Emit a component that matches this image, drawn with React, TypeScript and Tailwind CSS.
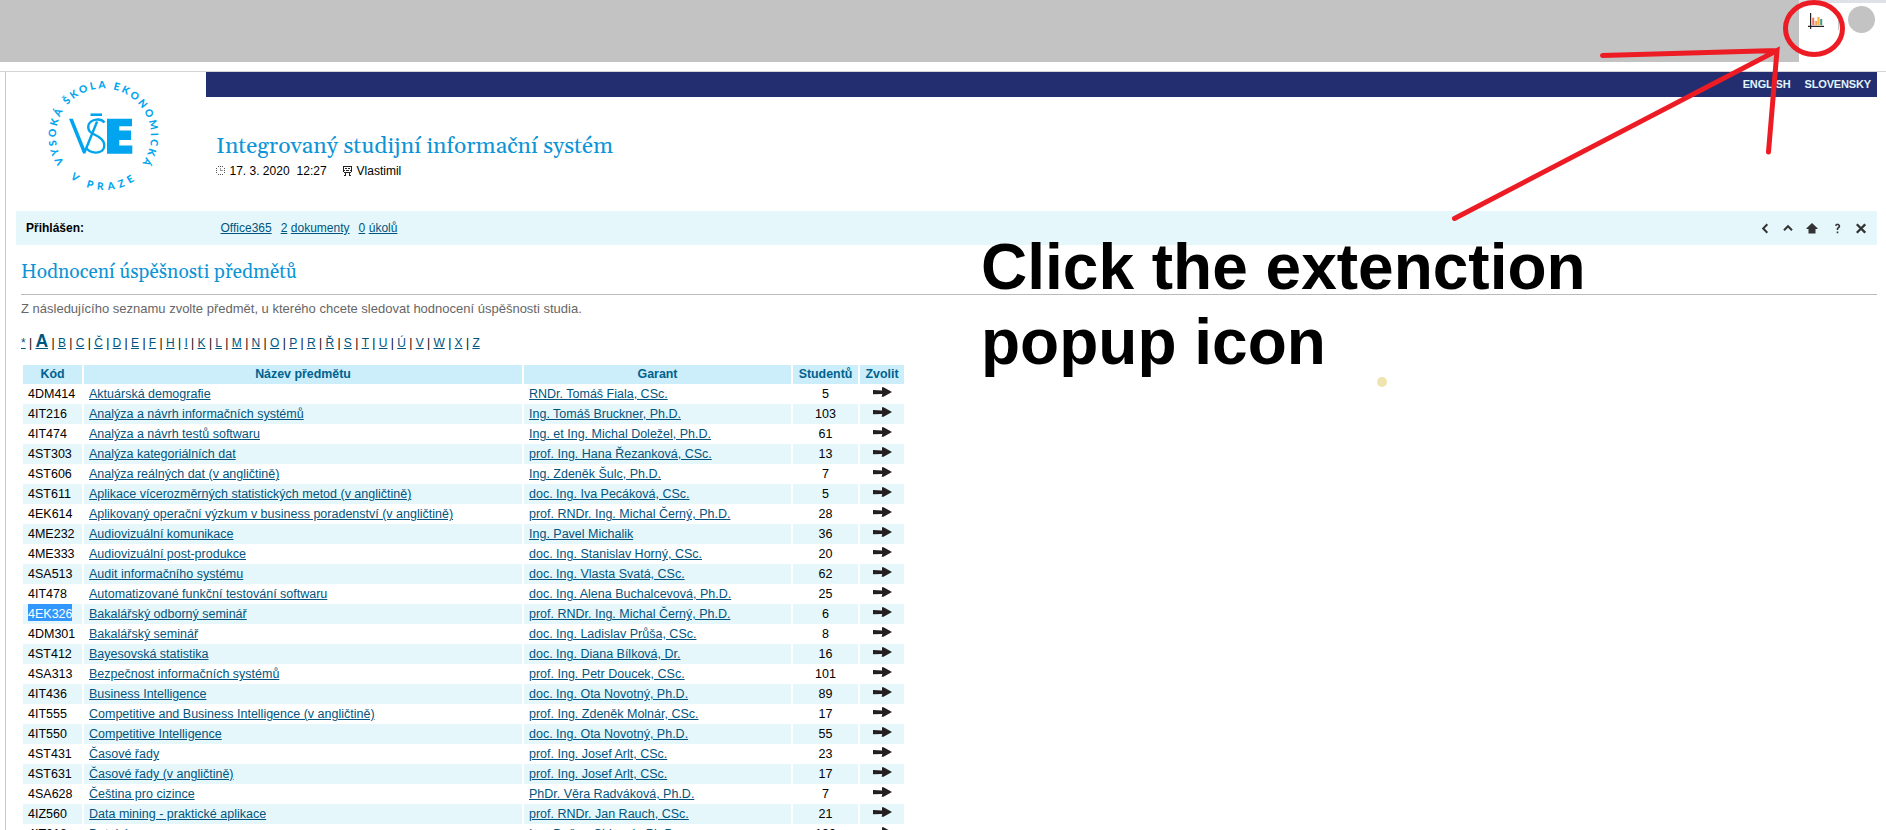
import React from "react";

type Course = [code: string, name: string, lecturer: string, students: number];

const courses: Course[] = [
  ["4DM414", "Aktuárská demografie", "RNDr. Tomáš Fiala, CSc.", 5],
  ["4IT216", "Analýza a návrh informačních systémů", "Ing. Tomáš Bruckner, Ph.D.", 103],
  ["4IT474", "Analýza a návrh testů softwaru", "Ing. et Ing. Michal Doležel, Ph.D.", 61],
  ["4ST303", "Analýza kategoriálních dat", "prof. Ing. Hana Řezanková, CSc.", 13],
  ["4ST606", "Analýza reálných dat (v angličtině)", "Ing. Zdeněk Šulc, Ph.D.", 7],
  ["4ST611", "Aplikace vícerozměrných statistických metod (v angličtině)", "doc. Ing. Iva Pecáková, CSc.", 5],
  ["4EK614", "Aplikovaný operační výzkum v business poradenství (v angličtině)", "prof. RNDr. Ing. Michal Černý, Ph.D.", 28],
  ["4ME232", "Audiovizuální komunikace", "Ing. Pavel Michalik", 36],
  ["4ME333", "Audiovizuální post-produkce", "doc. Ing. Stanislav Horný, CSc.", 20],
  ["4SA513", "Audit informačního systému", "doc. Ing. Vlasta Svatá, CSc.", 62],
  ["4IT478", "Automatizované funkční testování softwaru", "doc. Ing. Alena Buchalcevová, Ph.D.", 25],
  ["4EK326", "Bakalářský odborný seminář", "prof. RNDr. Ing. Michal Černý, Ph.D.", 6],
  ["4DM301", "Bakalářský seminář", "doc. Ing. Ladislav Průša, CSc.", 8],
  ["4ST412", "Bayesovská statistika", "doc. Ing. Diana Bílková, Dr.", 16],
  ["4SA313", "Bezpečnost informačních systémů", "prof. Ing. Petr Doucek, CSc.", 101],
  ["4IT436", "Business Intelligence", "doc. Ing. Ota Novotný, Ph.D.", 89],
  ["4IT555", "Competitive and Business Intelligence (v angličtině)", "prof. Ing. Zdeněk Molnár, CSc.", 17],
  ["4IT550", "Competitive Intelligence", "doc. Ing. Ota Novotný, Ph.D.", 55],
  ["4ST431", "Časové řady", "prof. Ing. Josef Arlt, CSc.", 23],
  ["4ST631", "Časové řady (v angličtině)", "prof. Ing. Josef Arlt, CSc.", 17],
  ["4SA628", "Čeština pro cizince", "PhDr. Věra Radváková, Ph.D.", 7],
  ["4IZ560", "Data mining - praktické aplikace", "prof. RNDr. Jan Rauch, CSc.", 21],
  ["4IT218", "Databáze", "Ing. Dušan Chlapek, Ph.D.", 190],
];

const letters = "* A B C Č D E F H I K L M N O P R Ř S T U Ú V W X Z".split(" ");

const link = "text-[#00557f] underline underline-offset-1";
const columns = "grid grid-cols-[59px_438px_267px_65px_44px] gap-x-0.5";

function Logo() {
  return (
    <svg className="ml-[39px] mt-1 h-[120px] w-[120px]" viewBox="0 0 120 120" fill="#00a4ef">
      <defs>
        <path id="ring-top" d="M19 86.500 A47.500 47.500 0 1 1 98.500 85.300" />
        <path id="ring-bottom" d="M25 102 A54.500 54.500 0 0 0 92.500 102.600" />
      </defs>
      <g className="font-['Lato','Liberation_Sans',sans-serif] text-[10.2px] font-black">
        <text textLength="206" lengthAdjust="spacing">
          <textPath href="#ring-top" textLength="206">VYSOKÁ ŠKOLA EKONOMICKÁ</textPath>
        </text>
        <text textLength="69">
          <textPath href="#ring-bottom" textLength="69">V PRAZE</textPath>
        </text>
      </g>
      <rect x="45.5" y="37.4" width="11.5" height="2.6" />
      <path d="M62 42.7h25v7.6H74.3v4.3H86v9.4H74.3v5.4H87.3v8.3H62z" />
      <path d="M24 42.7h3.800L39.8 72.500 51 45l2.200.9L40.4 77.5h-2.4z" />
      <path
        d="M59.5 46.5C56 42 46 42.500 43.500 49 C41.500 57 50 58 54.500 61.500 C61 66 60.500 73.500 55 75.800 C50 77.800 44.500 76 41.500 72.500"
        fill="none" stroke="#00a4ef" strokeWidth="2.300"
      />
    </svg>
  );
}

function ClockIcon() {
  return (
    <svg className="h-[10px] w-[10px]" viewBox="0 0 10 10" fill="#555" shapeRendering="crispEdges">
      <path d="M2 0h1v1H2zM4 0h1v1H4zM6 0h1v1H6zM0 2h1v1H0zM8 2h1v1H8zM0 4h1v1H0zM0 6h1v1H0zM8 6h1v1H8zM8 4h1v1H8zM2 8h1v1H2zM4 8h1v1H4zM6 8h1v1H6z" />
      <path d="M4 2h1v3H4zM5 4h2v1H5z" fill="#999" />
    </svg>
  );
}

function UserIcon() {
  return (
    <svg className="h-[10px] w-[9px]" viewBox="0 0 9 10" fill="#222" shapeRendering="crispEdges">
      <path d="M0 0h9v1H0zM0 1h1v5H0zM8 1h1v5H8zM2 2h2v1H2zM5 2h2v1H5zM1 4h1v1H1zM7 4h1v1H7zM3 4h3v1H3zM1 6h7v1H1zM2 7h1v2H2zM6 7h1v2H6zM1 9h2v1H1zM6 9h2v1H6z" />
    </svg>
  );
}

function RowArrow() {
  return (
    <svg className="mb-1 h-[10px] w-[19px]" viewBox="0 0 19 10" fill="#231f20">
      <path d="M0 3 L9 3.400 V.2 H10.500 L19 5 L10.500 9.800 H8.600 L9.300 7 L0 7.300z" />
    </svg>
  );
}

function ToolIcons() {
  return (
    <svg className="h-[11px] w-[105px]" viewBox="0 0 105 11" fill="none" stroke="#333" strokeWidth="2">
      <path d="M6.300 1.300 L2.200 5.500 L6.300 9.700" />
      <path d="M23 7.300 L27 3.200 L31 7.300" />
      <path d="M45.500 6V5.200L51 0l5.500 5.200V6h-2v4.500h-7V6z" fill="#333" stroke="none" />
      <path d="M74.500 2.600 L75.700 1.500 H77.300 L78.300 2.500 V3.800 L76.500 5.500 V7 M76.500 8.500 V10.300" strokeWidth="1.600" />
      <path d="M95.800 1.300 L104.200 9.700 M104.200 1.300 L95.800 9.700" strokeWidth="2.300" />
    </svg>
  );
}

function BrowserBar() {
  return (
    <div className="flex h-[71px] w-full items-start">
      <div className="h-[62px] w-[1799px] bg-[#c3c3c3]" />
      <div className="flex flex-1 flex-col">
        <div className="h-[3px] bg-[#dee1e6]" />
        <div className="flex pl-[9px] pt-[3px]">
          <svg className="mt-[6px] h-[18px] w-[17px]" viewBox="0 0 17 18">
            <path d="M4.200 5.700h2V13h-2z" fill="#f4735e" />
            <path d="M6.200 8.500h1.200V13H6.200z" fill="#f9c3b0" />
            <path d="M7.400 9h1.500v4H7.400z" fill="#f2914a" />
            <path d="M9.400 5h2.200v8H9.400z" fill="#f7b13c" />
            <path d="M12.200 7h2v6h-2z" fill="#3a9a80" />
            <path d="M2.600 1v16M0 14.400h16" stroke="#222" strokeWidth="1.200" fill="none" />
          </svg>
          <div className="ml-[13px] mt-[14px] h-[10px] w-px bg-[#c8c8c8]" />
          <div className="ml-[9px] h-[27px] w-[27px] rounded-full bg-[#c3c3c3]" />
        </div>
      </div>
    </div>
  );
}

function Annotation() {
  return (
    <>
      <svg className="pointer-events-none absolute left-0 top-0 h-[830px] w-[1886px]" viewBox="0 0 1886 830" fill="none">
        <g stroke="#ed1c24" strokeWidth="5" strokeLinecap="round">
          <ellipse cx="1814" cy="28.500" rx="28.500" ry="26" />
          <path d="M1602.500 55.500 L1777 50.500 M1454.500 218.500 L1777 50.500 L1768.500 152" />
        </g>
        <circle cx="1382" cy="382" r="5" fill="#efe4b0" />
      </svg>
      <p className="absolute left-[981px] top-[230px] w-[640px] text-[64px] font-bold leading-[75px] text-black">
        Click the extenction popup icon
      </p>
    </>
  );
}

export default function App() {
  return (
    <div className="relative h-[830px] w-[1886px] overflow-hidden bg-white font-['Liberation_Sans',Arial,sans-serif] text-[12.5px] text-black">
      <BrowserBar />
      <div className="h-[760px] border-t border-[#d5d5d5] pl-[5px]">
        <div className="h-full border-l border-[#c8c8c8] pr-[9px]">
          <header className="flex h-[139px]">
            <div className="w-[200px] shrink-0">
              <Logo />
            </div>
            <div className="flex-1">
              <nav className="flex h-[25px] justify-end gap-[14px] bg-[#232e70] pr-[6px] pt-[4px] text-[11px] font-bold leading-4 tracking-[-0.15px] text-[#e0f5fc]">
                <span>ENGLISH</span>
                <span>SLOVENSKY</span>
              </nav>
              <h1 className="mt-[35px] pl-[10px] font-['Gelasio','Liberation_Serif',serif] text-[22.8px] leading-[30px] text-[#0d94d6]">
                Integrovaný studijní informační systém
              </h1>
              <div className="mt-px flex items-center pl-[10px] text-[12px] leading-4">
                <ClockIcon />
                <span className="ml-[3.5px]">17. 3. 2020</span>
                <span className="ml-[7px]">12:27</span>
                <span className="ml-[16px] mr-[5px]"><UserIcon /></span>
                <span>Vlastimil</span>
              </div>
            </div>
          </header>

          <div className="ml-[10px] flex h-[34px] items-center bg-[#e5f7fb] pl-[10px] pr-[11px] text-[12px]">
            <span className="w-[194.5px] font-bold">Přihlášen:</span>
            <a className={link}>Office365</a>
            <a className={`ml-[9px] ${link}`}>2</a>
            <a className={`ml-[3.5px] ${link}`}>dokumenty</a>
            <a className={`ml-[9px] ${link}`}>0</a>
            <a className={`ml-[3.5px] ${link}`}>úkolů</a>
            <span className="ml-auto"><ToolIcons /></span>
          </div>

          <main className="pl-[15px]">
            <h2 className="h-[50px] border-b border-[#bbb] pt-[15px] font-['Gelasio','Liberation_Serif',serif] text-[19.2px] leading-[26px] text-[#0d94d6]">
              Hodnocení úspěšnosti předmětů
            </h2>
            <p className="mt-[6px] text-[13px] leading-4 text-[#666]">
              Z následujícího seznamu zvolte předmět, u kterého chcete sledovat hodnocení úspěšnosti studia.
            </p>
            <div className="mt-[12px] flex h-6 items-baseline text-[12px] leading-6">
              {letters.map((letter, i) => (
                <React.Fragment key={letter}>
                  {i > 0 && <span className="mx-[3.33px]">|</span>}
                  <a className={letter === "A" ? `text-[17.5px] font-bold ${link}` : link}>{letter}</a>
                </React.Fragment>
              ))}
            </div>

            <div className="ml-[2px] mt-[12px] w-[881px]">
              <div className={`${columns} h-[17px] text-center font-bold leading-[19px] text-[#00628f]`}>
                {["Kód", "Název předmětu", "Garant", "Studentů", "Zvolit"].map((title) => (
                  <div key={title} className="bg-[#cbeefa] text-[12.4px]">{title}</div>
                ))}
              </div>
              {courses.map(([code, name, lecturer, students]) => (
                <div key={code} className={`${columns} group mt-0.5 h-[18px] leading-[20px]`}>
                  <div className="pl-[5px] group-odd:bg-[#e5f7fb]">
                    <span className={code === "4EK326" ? "inline-block h-[17px] bg-[#3297fd] text-white" : ""}>{code}</span>
                  </div>
                  <div className="pl-[5px] group-odd:bg-[#e5f7fb]"><a className={link}>{name}</a></div>
                  <div className="pl-[5px] group-odd:bg-[#e5f7fb]"><a className={link}>{lecturer}</a></div>
                  <div className="text-center group-odd:bg-[#e5f7fb]">{students}</div>
                  <div className="flex items-center justify-center group-odd:bg-[#e5f7fb]"><RowArrow /></div>
                </div>
              ))}
            </div>
          </main>
        </div>
      </div>
      <Annotation />
    </div>
  );
}
